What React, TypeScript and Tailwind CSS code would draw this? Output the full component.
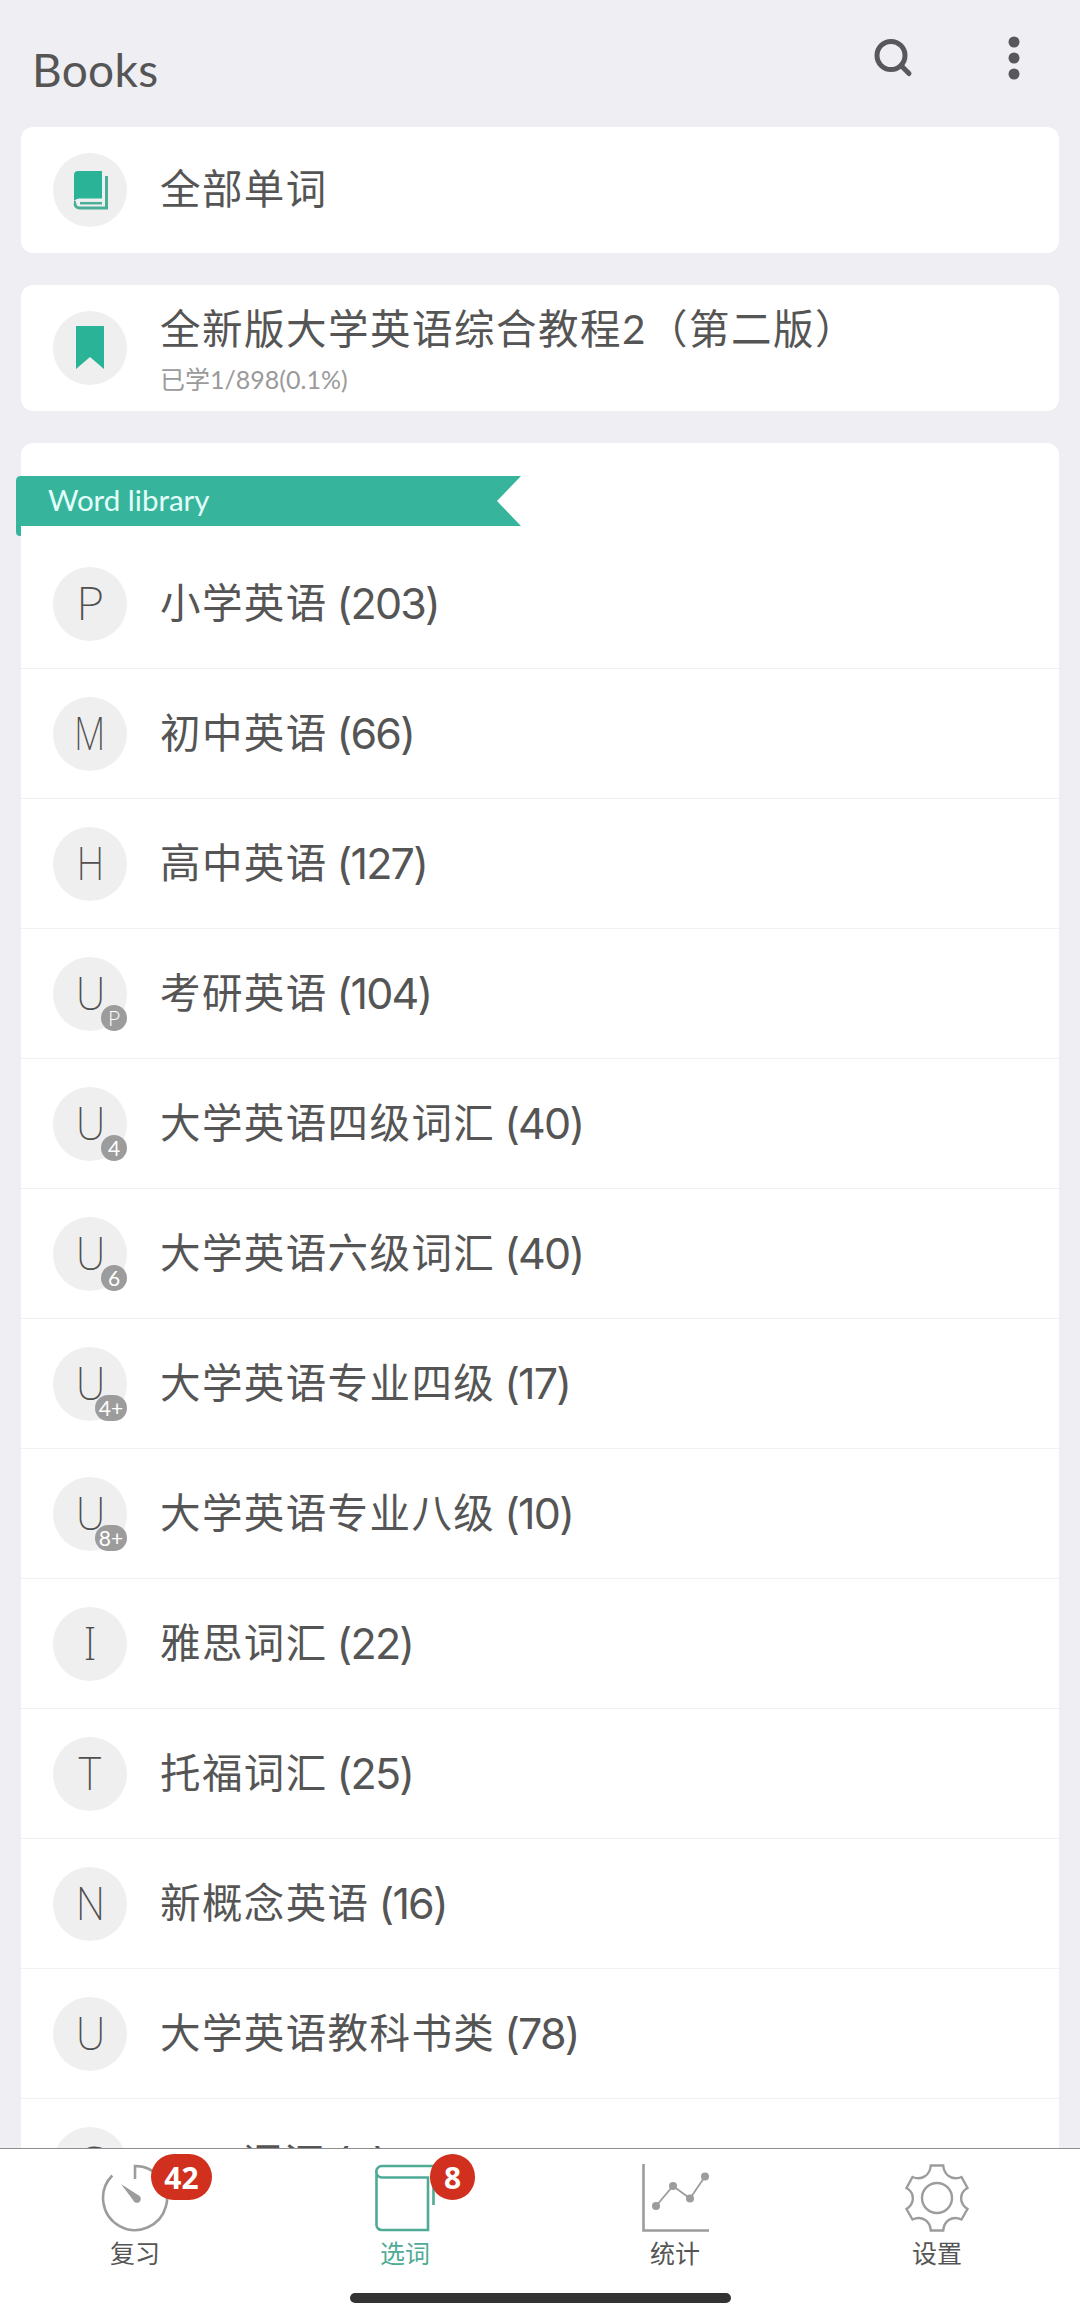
import React from "react";
import clsx from "clsx";

interface WordBook {
  letter: string;
  name: string;
  count: number;
  badge?: string;
}

const BOOKS: WordBook[] = [
  { letter: "P", name: "小学英语", count: 203 },
  { letter: "M", name: "初中英语", count: 66 },
  { letter: "H", name: "高中英语", count: 127 },
  { letter: "U", name: "考研英语", count: 104, badge: "P" },
  { letter: "U", name: "大学英语四级词汇", count: 40, badge: "4" },
  { letter: "U", name: "大学英语六级词汇", count: 40, badge: "6" },
  { letter: "U", name: "大学英语专业四级", count: 17, badge: "4+" },
  { letter: "U", name: "大学英语专业八级", count: 10, badge: "8+" },
  { letter: "I", name: "雅思词汇", count: 22 },
  { letter: "T", name: "托福词汇", count: 25 },
  { letter: "N", name: "新概念英语", count: 16 },
  { letter: "U", name: "大学英语教科书类", count: 78 },
  { letter: "C", name: "ACT词汇", count: 5 },
];

const LETTER_WIDTH: Record<string, string> = {
  P: "scale-x-105",
  M: "scale-x-80",
  H: "scale-x-85",
  U: "scale-x-90",
  N: "scale-x-90",
  T: "scale-x-95",
};

const CircleIcon = ({ children }: { children: React.ReactNode }) => (
  <div className="relative flex h-[74px] w-[74px] shrink-0 items-center justify-center rounded-full bg-[#efefef]">
    {children}
  </div>
);

const BookRow = ({ book }: { book: WordBook }) => (
  <div className="flex h-[130px] shrink-0 items-center gap-[33px] border-b border-[#f1f1f1] pl-8">
    <CircleIcon>
      <span
        className={clsx(
          "pb-1 font-['Noto_Sans'] text-[46px] leading-none font-extralight text-[#505050]",
          LETTER_WIDTH[book.letter]
        )}
      >
        {book.letter}
      </span>
      {book.badge && (
        <span
          className={clsx(
            "absolute right-0 bottom-0 flex h-[26px] items-center justify-center rounded-full bg-[#9c9c9c] pb-px text-[21px] leading-none text-white",
            book.badge.length > 1 ? "w-8" : "w-[26px]",
            book.badge === "P" && "font-light"
          )}
        >
          {book.badge}
        </span>
      )}
    </CircleIcon>
    <div className="flex items-center pb-px leading-none whitespace-nowrap">
      <span className="text-[40.5px] tracking-[1.4px]">{book.name}</span>
      <span className="ml-[9px] font-['Inter'] text-[43px] tracking-[-1.8px]">({book.count})</span>
    </div>
  </div>
);

const TimerIcon = () => (
  <svg width="68" height="68" viewBox="0 0 68 68" fill="none" stroke="#9c9c9c" strokeWidth="2.6">
    <path d="M11.3 11.5A32 32 0 1 0 34 2v13" />
    <path d="M20 20l17 11a4 4 0 1 1-5 5z" fill="#9c9c9c" stroke="none" />
  </svg>
);

const BookIcon = () => (
  <svg width="62" height="68" viewBox="0 0 62 68" fill="none" stroke="#4fab95" strokeWidth="2.6">
    <path d="M59.500 41V2H8a5.700 5.700 0 0 0 0 11.500H54V66H7.500a5 5 0 0 1-5-5V7.500" />
  </svg>
);

const ChartIcon = () => (
  <svg width="68" height="68" viewBox="0 0 68 68" fill="none" stroke="#9c9c9c">
    <path d="M2.500 0V66.500H68" strokeWidth="2.600" />
    <path d="M15 42L32 22L49 34.500L64 12.500" strokeWidth="1.800" />
    <g fill="#9c9c9c" stroke="none">
      <circle cx="15" cy="42" r="4" />
      <circle cx="32" cy="22" r="4" />
      <circle cx="49" cy="34.500" r="4" />
      <circle cx="64" cy="12.500" r="4" />
    </g>
  </svg>
);

const GearIcon = () => (
  <svg width="64" height="68" viewBox="0 0 64 68" fill="none" stroke="#9c9c9c" strokeWidth="2.4">
    <path d="M25.800 1.500H38.200C39 11 47 17 56.500 13L62.500 24C54 29 54 39 62.500 45L56.500 55.500C47 51 39 57 38.200 66.500H25.800C25 57 17 51 7.500 55.500L1.500 45C10 39 10 29 1.500 24L7.500 13C17 17 25 11 25.800 1.500Z" />
    <circle cx="32" cy="34" r="15" />
  </svg>
);

const TABS = [
  { label: "复习", icon: <TimerIcon />, badge: "42", badgePos: "left-[151px] w-[61px]" },
  { label: "选词", icon: <BookIcon />, badge: "8", badgePos: "left-[160px] w-[45px]", active: true },
  { label: "统计", icon: <ChartIcon /> },
  { label: "设置", icon: <GearIcon />, className: "pr-4" },
];

export default function App() {
  return (
    <div className="flex h-[2319px] w-[1080px] flex-col overflow-hidden bg-[#eeeef3] font-['Lato','Noto_Sans_CJK_SC',sans-serif] text-[#555]">
      <header className="flex h-[127px] shrink-0 items-start justify-between pr-[57px] pl-8">
        <h1 className="mt-[42px] text-[46px] leading-[56px] tracking-[0.3px]">Books</h1>
        <div className="mt-9 flex items-start gap-[92px]">
          <svg width="40" height="42" viewBox="0 0 40 42" fill="none" stroke="#58585c" strokeWidth="5">
            <circle cx="18" cy="19.500" r="14" />
            <path d="M28 29.500l8 8" strokeLinecap="round" />
          </svg>
          <svg width="18" height="44" viewBox="0 0 18 44" fill="#58585c">
            <circle cx="9" cy="6" r="5.500" />
            <circle cx="9" cy="22" r="5.500" />
            <circle cx="9" cy="38" r="5.500" />
          </svg>
        </div>
      </header>

      <main className="flex min-h-0 flex-1 flex-col gap-8 overflow-hidden px-[21px]">
        <section className="flex h-[126px] shrink-0 items-center gap-[33px] rounded-xl bg-white pl-8">
          <CircleIcon>
            <svg width="36" height="40" viewBox="0 0 36 40">
              <path d="M6 1H30V28.500H7Q4 28.500 2 31V5Q2 1 6 1Z" fill="#2ab396" />
              <path d="M34.500 6V38H7.500a4.500 4.500 0 0 1-4.500-4.500" fill="none" stroke="#4aae98" strokeWidth="3" />
              <path d="M3 35V31" stroke="#4aae98" strokeWidth="2" />
              <path d="M8 33.200H30" stroke="#4aae98" strokeWidth="2.500" />
            </svg>
          </CircleIcon>
          <span className="pb-0.5 text-[40.5px] leading-none tracking-[1.4px]">全部单词</span>
        </section>

        <section className="flex h-[126px] shrink-0 items-center gap-[33px] rounded-xl bg-white pl-8">
          <CircleIcon>
            <svg width="28" height="44" viewBox="0 0 28 44">
              <path d="M0 0H28V43L14 31L0 43Z" fill="#2ab396" />
            </svg>
          </CircleIcon>
          <div className="flex flex-col gap-2 pt-[5px]">
            <span className="text-[40.5px] leading-[48px] tracking-[1.5px]">全新版大学英语综合教程2（第二版）</span>
            <span className="text-[25px] leading-[36px] text-[#9a9a9a]">已学1/898(0.1%)</span>
          </div>
        </section>

        <section className="flex flex-1 flex-col rounded-t-xl bg-white pt-[33px]">
          <div className="relative -ml-[5px] flex h-[63px] w-[505px] shrink-0">
            <svg width="505" height="60" viewBox="0 0 505 60" className="absolute top-0 left-0" fill="#36b59c">
              <path d="M5 0H505L481 25L505 50H5V60H4Q0 60 0 56V5Q0 0 5 0Z" />
            </svg>
            <span className="relative pl-8 text-[29.5px] leading-[48px] text-[#e4fffa]">Word library</span>
          </div>
          {BOOKS.map((book) => (
            <BookRow key={book.name} book={book} />
          ))}
        </section>
      </main>

      <nav className="flex h-[171px] shrink-0 flex-col items-center border-t border-[#8e8e90] bg-white">
        <div className="grid h-[144px] w-full grid-cols-4">
          {TABS.map((tab) => (
            <div
              key={tab.label}
              className={clsx("relative flex flex-col items-center gap-1 pt-[15px]", tab.className)}
            >
              {tab.icon}
              <span className={clsx("text-[25px] leading-[34px]", tab.active && "text-[#4fab95]")}>{tab.label}</span>
              {tab.badge && (
                <span
                  className={clsx(
                    "absolute top-[5px] flex h-[46px] items-center justify-center rounded-full bg-[#d0301d] font-['Noto_Sans'] text-[30px] font-bold text-white",
                    tab.badgePos
                  )}
                >
                  {tab.badge}
                </span>
              )}
            </div>
          ))}
        </div>
        <div className="h-[10px] w-[381px] rounded-full bg-[#333]" />
      </nav>
    </div>
  );
}
